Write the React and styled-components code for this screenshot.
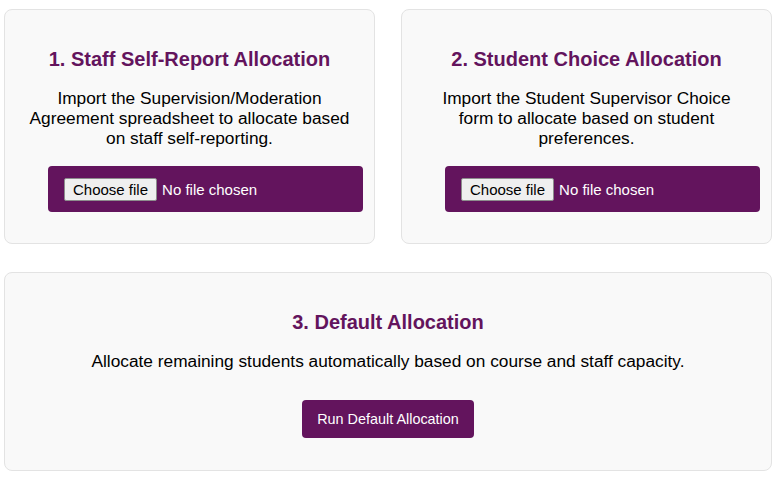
import React from 'react';
import styled, { createGlobalStyle } from 'styled-components';

const GlobalStyle = createGlobalStyle`
    body {
        margin: 0;
        background: #ffffff;
        font-family: "Liberation Sans", Arial, sans-serif;
        color: #000000;
    }
`;

const Page = styled.div`
    width: 768px;
    padding: 9px 0 0 4px;
    display: grid;
    grid-template-columns: repeat(2, minmax(0, 1fr));
    column-gap: 26px;
    row-gap: 28px;
`;

const Card = styled.section`
    grid-column: ${(props) => props.wide ? '1 / -1' : 'auto'};
    min-width: 0;
    display: flex;
    flex-direction: column;
    align-items: ${(props) => props.wide ? 'center' : 'flex-start'};
    padding: 20px 22px;
    border: 1px solid #e3e3e3;
    border-radius: 8px;
    background-color: #f9f9f9;
    text-align: center;
`;

const Title = styled.h3`
    align-self: stretch;
    margin: 17px 0 0;
    font-size: 20px;
    line-height: 24px;
    font-weight: bold;
    color: #63145d;
`;

const Description = styled.p`
    align-self: stretch;
    margin: 17px 0 0;
    font-size: 17.3px;
    line-height: 20px;
`;

const UploadBox = styled.label`
    display: flex;
    flex-shrink: 0;
    align-items: center;
    box-sizing: border-box;
    width: 315px;
    height: 46px;
    margin: 18px 0 11px 21px;
    padding: 0 16px;
    border-radius: 4px;
    background-color: #63145d;
    color: #ffffff;
    font-size: 15px;
    cursor: pointer;

    input {
        display: none;
    }
`;

const ChooseButton = styled.span`
    display: inline-flex;
    align-items: center;
    box-sizing: border-box;
    height: 23px;
    padding: 0 8px;
    margin-right: 5px;
    border: 1px solid #8d8d8d;
    border-radius: 2px;
    background-color: #efefef;
    color: #000000;
`;

const RunButton = styled.button`
    box-sizing: border-box;
    height: 38px;
    margin: 29px 0 12px;
    padding: 0 15px;
    border: none;
    border-radius: 4px;
    background-color: #63145d;
    color: #ffffff;
    font-family: "Liberation Sans", Arial, sans-serif;
    font-size: 14.4px;
    cursor: pointer;
`;

const FileInput = () => (
    <UploadBox>
        <input type="file" />
        <ChooseButton>Choose file</ChooseButton>
        <span>No file chosen</span>
    </UploadBox>
);

const App = () => {
    return (
        <>
            <GlobalStyle />
            <Page>
                <Card>
                    <Title>1. Staff Self-Report Allocation</Title>
                    <Description>
                        Import the Supervision/Moderation Agreement spreadsheet to allocate based on staff self-reporting.
                    </Description>
                    <FileInput />
                </Card>
                <Card>
                    <Title>2. Student Choice Allocation</Title>
                    <Description>
                        Import the Student Supervisor Choice form to allocate based on student preferences.
                    </Description>
                    <FileInput />
                </Card>
                <Card wide>
                    <Title>3. Default Allocation</Title>
                    <Description>
                        Allocate remaining students automatically based on course and staff capacity.
                    </Description>
                    <RunButton>Run Default Allocation</RunButton>
                </Card>
            </Page>
        </>
    );
};

export default App;
